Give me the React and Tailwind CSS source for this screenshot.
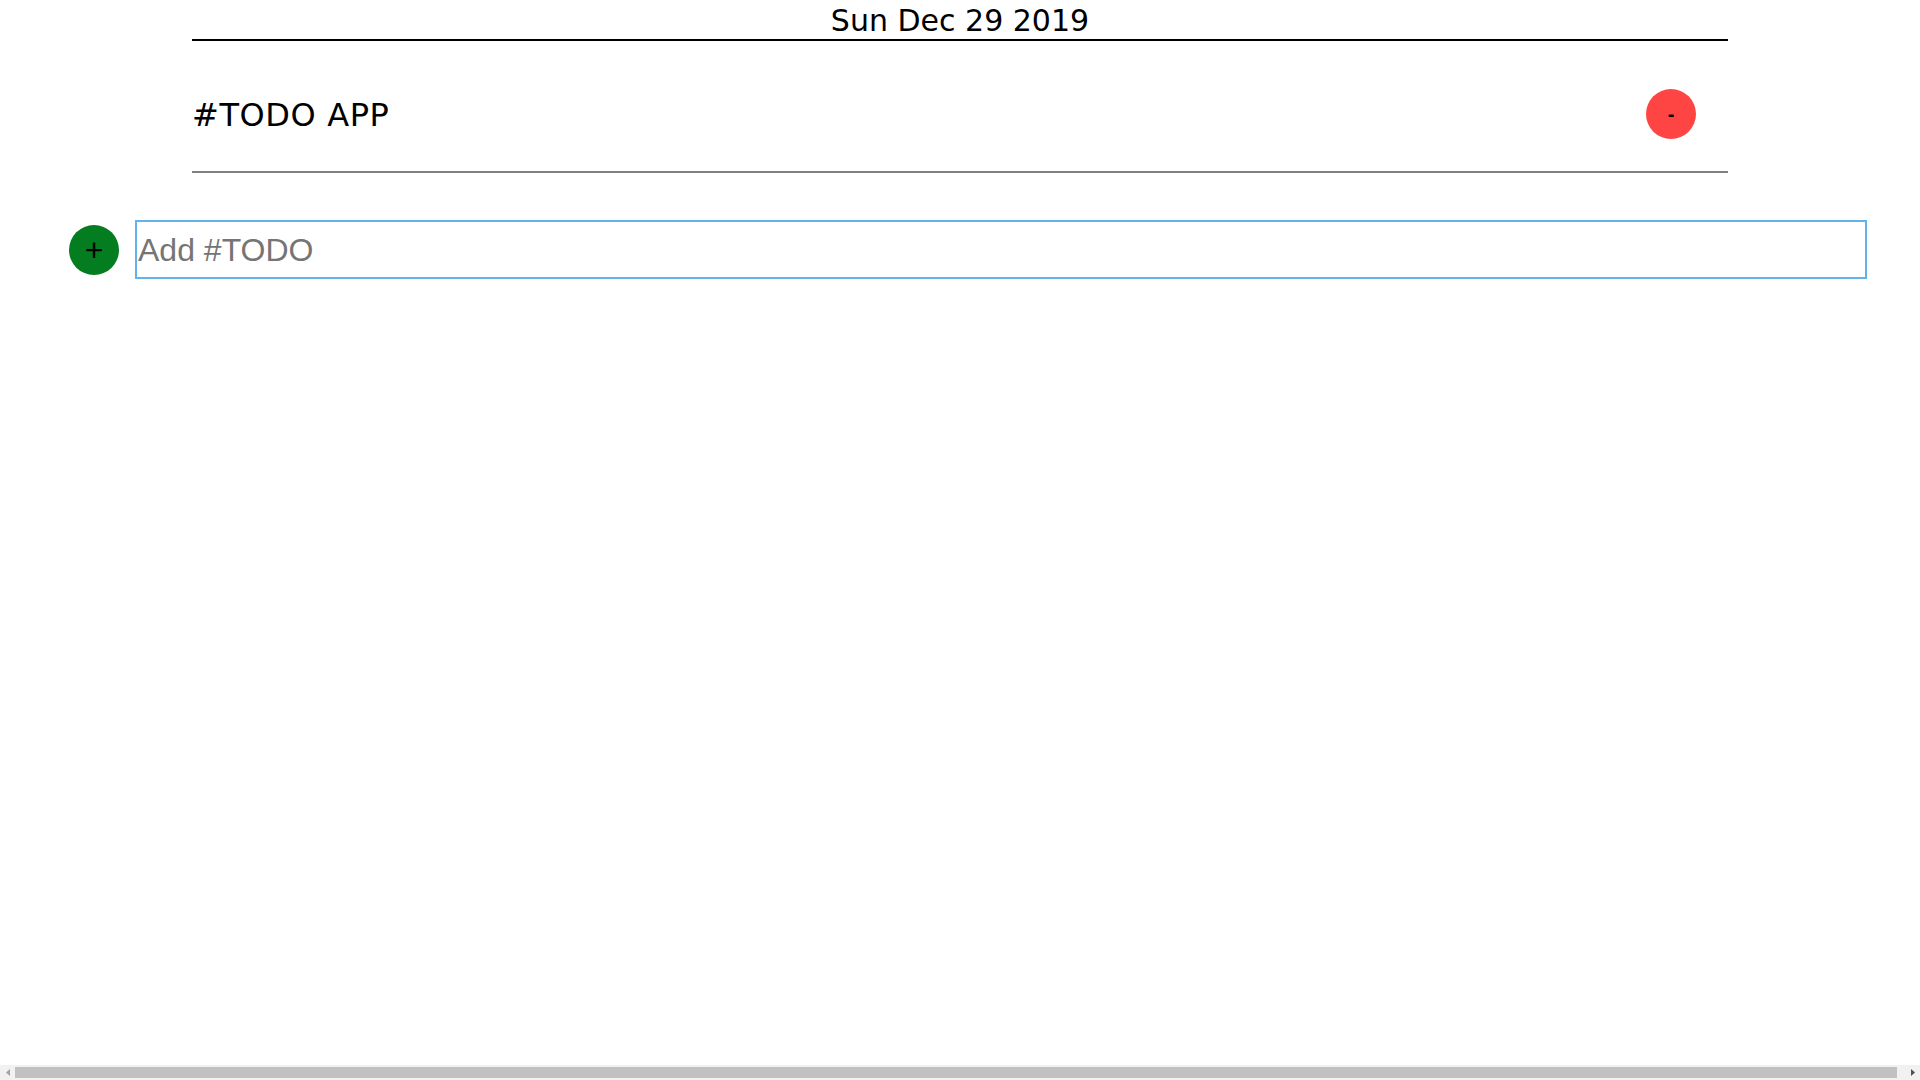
export default function App() {
  return (
    <div className="bg-white h-[1080px] flex flex-col overflow-hidden">
      <div className="flex-1">
        <header className="w-[80%] mx-auto">
          <div className="h-[41px] pt-[2px] border-b-2 border-black text-center text-[30px] leading-[38px] text-black font-['DejaVu_Sans',sans-serif]">
            Sun Dec 29 2019
          </div>
          <div className="h-[132px] pt-[18px] flex items-center justify-between border-b-2 border-[#808080]">
            <h1 className="text-[32px] leading-none tracking-[0.6px] text-black font-['DejaVu_Sans',sans-serif]">
              #TODO APP
            </h1>
            <button className="mr-[32px] -mt-[2px] w-[50px] h-[50px] rounded-full bg-[#ff4444] text-black text-[20px] font-bold leading-none flex items-center justify-center font-['Liberation_Sans',sans-serif]">
              -
            </button>
          </div>
        </header>

        <div className="mt-[47px] pl-[69px] flex items-center gap-[16px]">
          <button className="w-[50px] h-[50px] rounded-full bg-[#047d20] text-black text-[32px] leading-none flex items-center justify-center font-['Liberation_Sans',sans-serif]">
            +
          </button>
          <input
            autoFocus
            type="text"
            placeholder="Add #TODO"
            className="w-[1732px] h-[59px] pt-[2px] border-2 border-[#62b2ee] outline-none px-[1px] text-[32px] text-black placeholder:text-[#757575] font-['Liberation_Sans',sans-serif]"
          />
        </div>
      </div>

      {/* horizontal scrollbar strip */}
      <div className="h-[15px] bg-[#f1f1f1] flex items-center">
        <div className="w-[15px] flex justify-center">
          <svg width="4" height="7" viewBox="0 0 4 7">
            <path d="M4 0 L0 3.5 L4 7 Z" fill="#a3a3a3" />
          </svg>
        </div>
        <div className="flex-1 h-[11px] mr-[8px] bg-[#c1c1c1]" />
        <div className="w-[15px] flex justify-center">
          <svg width="4" height="7" viewBox="0 0 4 7">
            <path d="M0 0 L4 3.5 L0 7 Z" fill="#505050" />
          </svg>
        </div>
      </div>
    </div>
  );
}
